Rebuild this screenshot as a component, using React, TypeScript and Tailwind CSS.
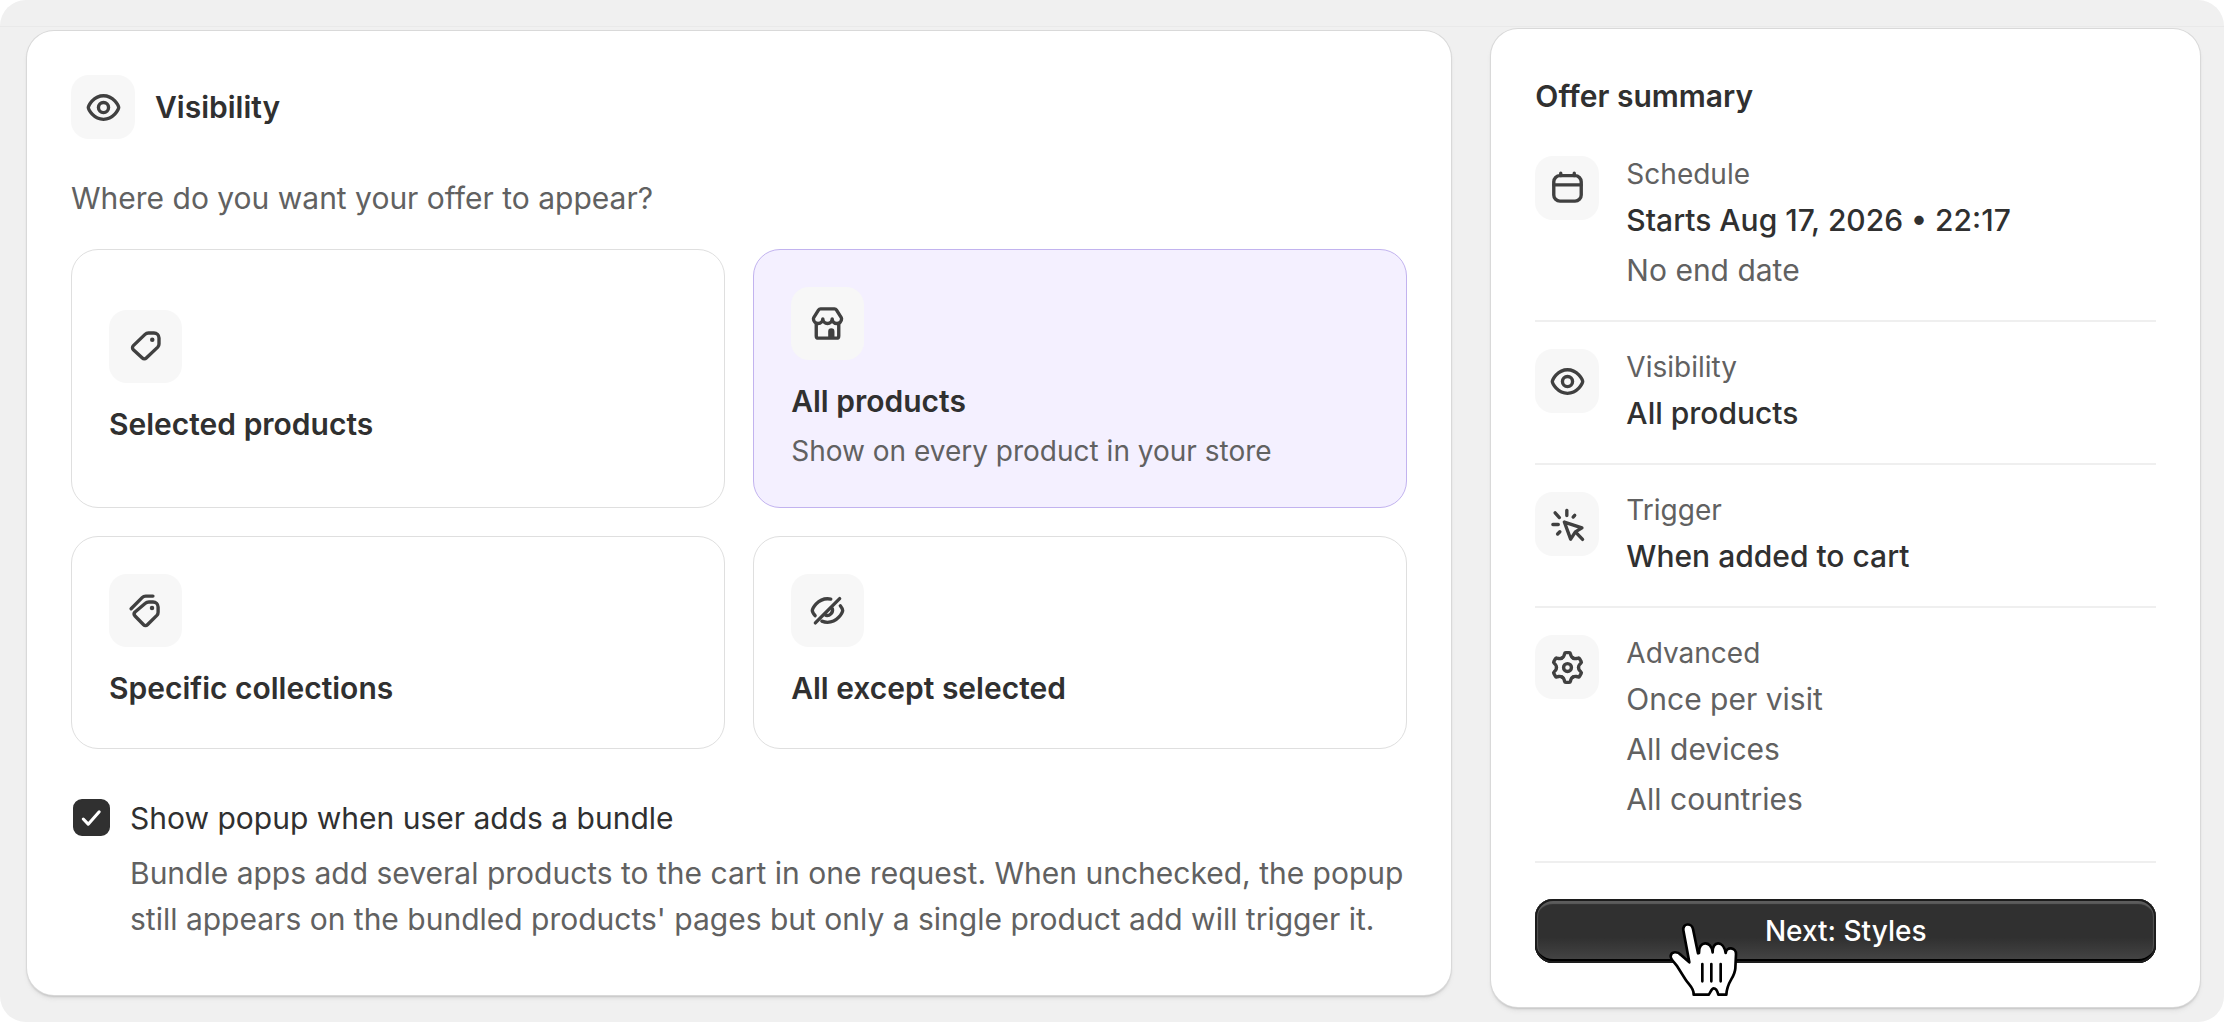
import React, { useState } from "react";

type IconProps = { className?: string };

const Svg: React.FC<React.PropsWithChildren<IconProps>> = ({ children, className = "size-[45px]" }) => (
  <svg
    viewBox="0 0 20 20"
    fill="none"
    stroke="currentColor"
    strokeWidth={1.5}
    strokeLinecap="round"
    strokeLinejoin="round"
    className={className}
    aria-hidden="true"
  >
    {children}
  </svg>
);

const EyeIcon = () => (
  <Svg>
    <circle cx="10" cy="10" r="2.25" />
    <path d="M10 4.75c-2.2 0-3.9 1.1-5.03 2.3a8.5 8.5 0 0 0-1.29 1.76c-.27.5-.43.95-.43 1.19s.16.69.43 1.19c.28.52.71 1.15 1.29 1.76 1.13 1.2 2.83 2.3 5.03 2.3s3.9-1.1 5.03-2.3a8.5 8.5 0 0 0 1.29-1.76c.27-.5.43-.95.43-1.19s-.16-.69-.43-1.19a8.5 8.5 0 0 0-1.29-1.76c-1.13-1.2-2.83-2.3-5.03-2.3Z" />
  </Svg>
);

const HideIcon = () => (
  <Svg>
    <path d="M4.6 15.5 15.4 4.7" />
    <path d="M4.5 12.3c-.85-1-1.25-1.9-1.25-2.3 0-.24.16-.69.43-1.19a8.5 8.5 0 0 1 1.29-1.76c1.13-1.2 2.83-2.3 5.03-2.3.5 0 1 .06 1.45.17" />
    <path d="M15.7 7.9c.7.9 1.05 1.7 1.05 2.1 0 .24-.16.69-.43 1.19a8.5 8.5 0 0 1-1.29 1.76c-1.13 1.2-2.83 2.3-5.03 2.3-.9 0-1.75-.2-2.5-.5" />
    <path d="M12.2 9.3c.3 1.7-1.2 3.2-2.9 2.9" />
  </Svg>
);

const TagIcon = () => (
  <Svg>
    <path d="M11.3 4h2.45A2.25 2.25 0 0 1 16 6.25V8.9a2 2 0 0 1-.55 1.38l-5.1 4.85a1.25 1.25 0 0 1-1.75 0L4.6 11.4a1.25 1.25 0 0 1 0-1.8l5.2-5A2.2 2.2 0 0 1 11.3 4Z" />
    <circle cx="13" cy="7" r="1" fill="currentColor" stroke="none" />
  </Svg>
);

const CollectionIcon = () => (
  <Svg>
    <path d="m3.6 9.2 4.9-4.9a2.3 2.3 0 0 1 1.6-.7h3.2" />
    <path d="M11.5 6.2h1.85a2.25 2.25 0 0 1 2.25 2.25v2.3a2 2 0 0 1-.55 1.4l-4.2 4.2a1.2 1.2 0 0 1-1.7 0l-3.8-3.9a1.3 1.3 0 0 1 0-1.8l4.6-3.85a2.3 2.3 0 0 1 1.55-.6Z" />
    <circle cx="12.9" cy="8.9" r="1" fill="currentColor" stroke="none" />
  </Svg>
);

const StoreIcon = () => (
  <Svg>
    <path d="M5 10v5.5a1 1 0 0 0 1 1h8a1 1 0 0 0 1-1V10" />
    <path d="M6.9 3.5h6.2a1 1 0 0 1 .85.47l2.1 3.3c.13.2.2.43.2.67a2.08 2.08 0 0 1-4.17 0 2.08 2.08 0 0 1-4.16 0 2.08 2.08 0 0 1-4.17 0c0-.24.07-.47.2-.67l2.1-3.3a1 1 0 0 1 .85-.47Z" />
    <path d="M10.3 16.5v-3a1.4 1.4 0 0 1 2.8 0v3Z" fill="currentColor" stroke="none" />
  </Svg>
);

const CalendarIcon = () => (
  <Svg>
    <rect x="3.9" y="4.3" width="12.2" height="11.3" rx="2.75" />
    <path d="M7 3.2v1.1M13 3.2v1.1M4 8.4h12" />
  </Svg>
);

const ClickIcon = () => (
  <Svg>
    <path d="m8.6 8.9 7.8 2.6-2.9 1.8-2.1 3.2Z" />
    <path d="m13.7 13.5 3 3.1M9.7 3.7v2.3M13.2 5.9l-.7.8M4.5 4.8l1.9 2.1M3.5 10h2.4M5.6 14.2l1-1" />
  </Svg>
);

const GearIcon = () => (
  <Svg>
    <circle cx="10" cy="10" r="1.75" />
    {[0, 60, 120, 180, 240, 300].map((deg) => (
      <path
        key={deg}
        transform={`rotate(${deg} 10 10)`}
        d="M7.55 5.76Q8.3 5.33 8.5 4.6L8.7 3.85Q8.8 3.4 9.25 3.4H10.75Q11.2 3.4 11.3 3.85L11.5 4.6Q11.7 5.33 12.45 5.76"
      />
    ))}
  </Svg>
);

const HandPointer: React.FC<IconProps> = ({ className }) => (
  <svg viewBox="80 90 216 231" className={className} aria-hidden="true">
    <path
      d="M147 214 129 118C126 96 154 95 158 114L173 187 176 186C173 150 213 146 217 184 215 150 249 146 256 186 258 166 288 168 287 190L285 232C283 262 260 270 258 311L234 311C231 299 226 292 220 292 214 292 211 303 205 311L160 311C162 292 146 282 135 265L110 225C104 215 90 205 91 195 93 180 112 181 122 192Z"
      fill="#fff"
      stroke="#000"
      strokeWidth="8"
      strokeLinejoin="round"
    />
    <path d="M186 219v52M213 219v52M241 219v52" stroke="#000" strokeWidth="8" strokeLinecap="round" />
  </svg>
);

const OPTIONS = [
  { id: "selected", title: "Selected products", Icon: TagIcon },
  { id: "all", title: "All products", hint: "Show on every product in your store", Icon: StoreIcon },
  { id: "collections", title: "Specific collections", Icon: CollectionIcon },
  { id: "except", title: "All except selected", Icon: HideIcon },
];

const SUMMARY = [
  { label: "Schedule", value: "Starts Aug 17, 2026 • 22:17", notes: ["No end date"], Icon: CalendarIcon },
  { label: "Visibility", value: "All products", notes: [], Icon: EyeIcon },
  { label: "Trigger", value: "When added to cart", notes: [], Icon: ClickIcon },
  { label: "Advanced", notes: ["Once per visit", "All devices", "All countries"], Icon: GearIcon },
];

const cardClass =
  "rounded-[27px] bg-white shadow-[0_0_0_1px_#d9d9d9,0_2px_2px_#c4c4c4,0_4px_4px_#e2e2e2]";

export default function App() {
  const [selected, setSelected] = useState("all");
  const [bundlePopup, setBundlePopup] = useState(true);

  return (
    <div className="min-h-screen bg-white font-['Inter',sans-serif] text-[30px] leading-[46px] text-[#303030]">
      <div className="min-h-screen rounded-[26px] bg-[#f0f0f0]">
        <div className="h-[27px] border-b border-[#e9e9e9]" />

        <main className="grid grid-cols-[201fr_100fr] items-start gap-10 pt-0.5 pr-6 pb-3 pl-[27px]">
          {/* Visibility settings */}
          <section className={`${cardClass} mt-0.5 px-11 pt-11 pb-[53px]`}>
            <div className="flex items-center gap-5">
              <span className="flex size-16 items-center justify-center rounded-[18px] bg-[#f7f7f7] text-[#404040]">
                <EyeIcon />
              </span>
              <h2 className="font-semibold">Visibility</h2>
            </div>

            <p className="mt-9 text-[#616161]">Where do you want your offer to appear?</p>

            <div className="mt-7 grid grid-cols-2 gap-7">
              {OPTIONS.map(({ id, title, hint, Icon }) => (
                <button
                  key={id}
                  type="button"
                  aria-pressed={selected === id}
                  onClick={() => setSelected(id)}
                  className={`flex cursor-pointer flex-col items-start justify-center rounded-[27px] border p-[37px] text-left ${
                    selected === id ? "border-[#c2b3ef] bg-[#f4f0ff]" : "border-[#dfdfdf] bg-white"
                  }`}
                >
                  <span className="flex size-[73px] items-center justify-center rounded-[18px] bg-[#f7f7f7] text-[#404040]">
                    <Icon />
                  </span>
                  <span className="mt-[18px] font-semibold">{title}</span>
                  {hint && <span className="mt-[9px] text-[28px] leading-[37px] text-[#616161]">{hint}</span>}
                </button>
              ))}
            </div>

            <div className="mt-[46px] flex items-start gap-5">
              <span className="relative mt-1 ml-0.5 size-[37px] shrink-0">
                <input
                  id="bundle-popup"
                  type="checkbox"
                  checked={bundlePopup}
                  onChange={(e) => setBundlePopup(e.target.checked)}
                  aria-describedby="bundle-popup-help"
                  className="peer block size-[37px] cursor-pointer appearance-none rounded-[9px] border-2 border-[#8a8a8a] checked:border-[#303030] checked:bg-[#303030]"
                />
                <svg
                  viewBox="0 0 36 36"
                  className="pointer-events-none absolute inset-0 hidden size-[37px] peer-checked:block"
                  aria-hidden="true"
                >
                  <path
                    d="m10 19.5 4.8 5L25.5 12.5"
                    fill="none"
                    stroke="#fff"
                    strokeWidth="3"
                    strokeLinecap="round"
                    strokeLinejoin="round"
                  />
                </svg>
              </span>
              <div>
                <label htmlFor="bundle-popup" className="block cursor-pointer">
                  Show popup when user adds a bundle
                </label>
                <p id="bundle-popup-help" className="mt-[9px] text-[#616161]">
                  Bundle apps add several products to the cart in one request. When unchecked, the popup still
                  appears on the bundled products' pages but only a single product add will trigger it.
                </p>
              </div>
            </div>
          </section>

          {/* Offer summary */}
          <aside className={`${cardClass} px-11 pt-11 pb-11`}>
            <h2 className="font-semibold">Offer summary</h2>

            <ul className="mt-2.5 divide-y-2 divide-[#efefef]">
              {SUMMARY.map(({ label, value, notes, Icon }) => (
                <li key={label} className="flex items-start gap-[27px] py-[27px]">
                  <span className="flex size-16 shrink-0 items-center justify-center rounded-[18px] bg-[#f7f7f7] text-[#404040]">
                    <Icon />
                  </span>
                  <div className="flex flex-col gap-1">
                    <span className="text-[28px] leading-[37px] text-[#616161]">{label}</span>
                    {value && <span className="font-medium">{value}</span>}
                    {notes.map((note) => (
                      <span key={note} className="text-[#616161]">
                        {note}
                      </span>
                    ))}
                  </div>
                </li>
              ))}
            </ul>

            <div className="mt-3 border-t-2 border-[#efefef] pt-9">
              <button
                type="button"
                className="relative flex h-16 w-full cursor-pointer items-center justify-center rounded-[18px] bg-linear-to-b from-[#303030] from-60% to-[#474747] text-[28px] font-medium text-white shadow-[inset_0_0_0_2px_#1c1c1c,inset_0_-4px_0_#000,inset_0_5px_1px_#5c5c5c,inset_3px_0_1px_#555,inset_-3px_0_1px_#555]"
              >
                Next: Styles
                <HandPointer className="pointer-events-none absolute top-[22px] left-[132px] w-[72px]" />
              </button>
            </div>
          </aside>
        </main>
      </div>
    </div>
  );
}
